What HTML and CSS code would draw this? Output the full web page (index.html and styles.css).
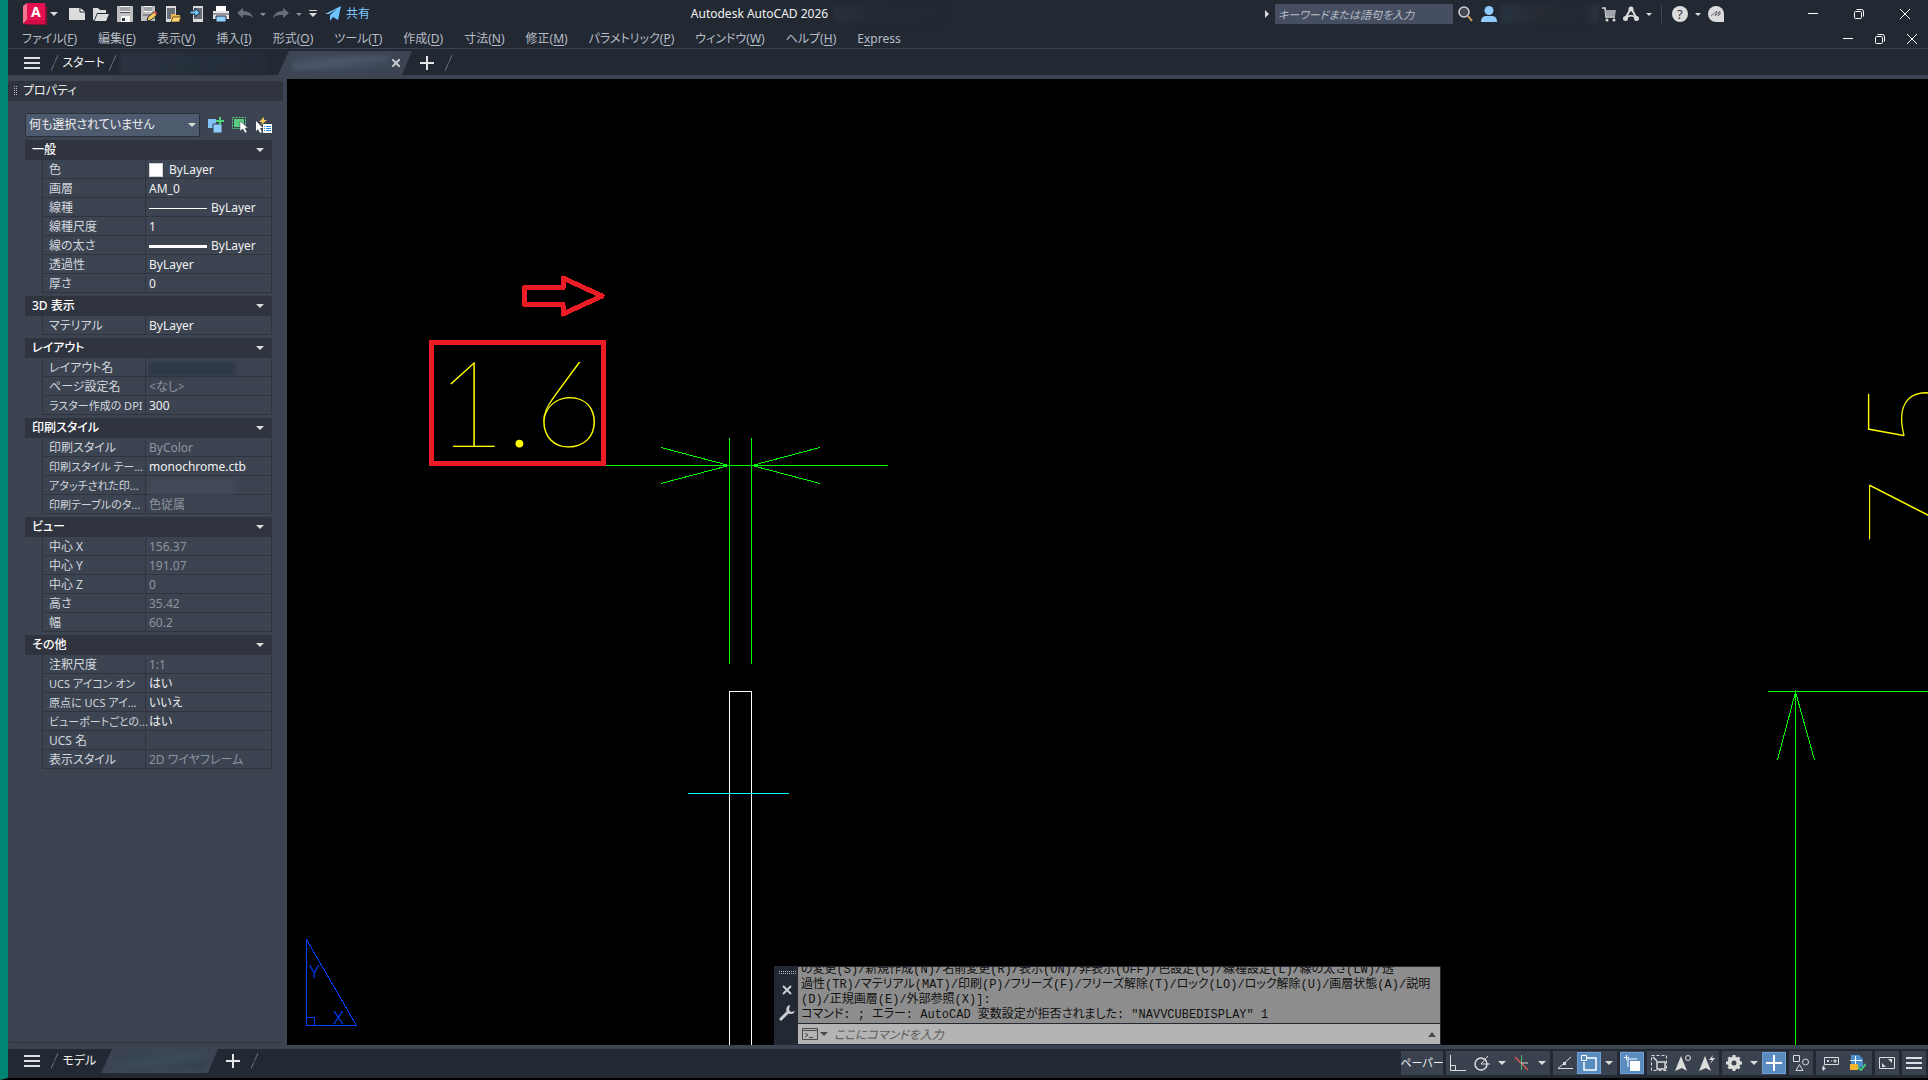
FILE: index.html
```html
<!DOCTYPE html>
<html lang="ja">
<head>
    <meta charset="UTF-8">
    <meta name="viewport" content="width=device-width, initial-scale=1.0">
    <title>Autodesk AutoCAD 2026</title>
    <link rel="stylesheet" href="styles.css">
</head>
<body>
    <header class="titlebar">
        <div class="quick-access">
            <button class="app-btn" aria-label="アプリケーション">
                <svg width="24" height="22" viewBox="0 0 24 22"><path d="M3 3h21v19H3z" fill="#8a0f35"/><path d="M0 3l4-3v17l-4 4z" fill="#f0748d"/><path d="M4 0h18v18H4z" fill="#e51050"/><path d="M0 21l4-4h18v4z" fill="#d30a45"/><text x="8" y="14" class="logo-letter">A</text></svg>
                <i class="caret"></i>
            </button>
            <button class="icon-btn" aria-label="新規"><svg width="16" height="16"><path d="M0 2h11l5 4v8H0z" fill="#dcdcdc"/><path d="M11 2v4h5" fill="#fff" stroke="#222933"/></svg></button>
            <button class="icon-btn" aria-label="開く"><svg width="16" height="16"><path d="M0 14V2h5l2 2h6v3H4L1 14z" fill="#dcdcdc"/><path d="M4.500 8H16l-3 7H1.500z" fill="#dcdcdc"/></svg></button>
            <button class="icon-btn" aria-label="上書き保存"><svg width="16" height="16"><path d="M0 0h16v16H0z" fill="#bfbfbf"/><path d="M3 0h10v6H3zM4 10h9v6H4z" fill="#f4f4f4"/><path d="M3 2h10M3 4h10M3 6.500h10" stroke="#4a4f58"/><path d="M5 12h3v3H5z" fill="#30353e"/></svg></button>
            <button class="icon-btn" aria-label="名前を付けて保存"><svg width="16" height="16"><path d="M0 0h14v15H0z" fill="#bfbfbf"/><path d="M3 0h8v6H3z" fill="#f4f4f4"/><path d="M3 2h8M3 4h8M2 9h9" stroke="#4a4f58"/><path d="M6 15l1-4 6-5 3 3-6 5z" fill="#f5c95c" stroke="#222933"/><path d="M12 6l2-1 2 2-1 2z" fill="#e05252"/></svg></button>
            <button class="icon-btn" aria-label="Web から開く"><svg width="16" height="16"><path d="M1 0h10v16H1z" fill="#dcdcdc"/><path d="M2 2h8v11H2z" fill="#6a6e76"/><path d="M6 15V8h4l1 1h4v6z" fill="#e8b64c"/><path d="M8 11h8l-2 5H6z" fill="#ffd77a" stroke="#6b4f1c"/></svg></button>
            <button class="icon-btn" aria-label="Web に保存"><svg width="16" height="16"><path d="M4 0h10v16H4z" fill="#dcdcdc"/><path d="M5 2h8v11H5z" fill="#6a6e76"/><path d="M1 5h5V2l5 4.500L6 11V8H1z" fill="#6fc3ff" stroke="#222933"/></svg></button>
            <button class="icon-btn" aria-label="印刷"><svg width="16" height="16"><path d="M3 0h10v5H3z" fill="#fff"/><path d="M0 5h16v8H0z" fill="#e6e6e6"/><path d="M0 8h16" stroke="#41464f"/><path d="M3 10h10v6H3z" fill="#8fd0ff" stroke="#222933"/></svg></button>
            <button class="icon-btn dim" aria-label="元に戻す"><svg width="16" height="16"><path d="M0 7l6-5v3c6 0 9 3 10 7-3-3-6-3-10-3v3z" fill="#696f79"/></svg></button>
            <button class="caret-btn dim" aria-label="元に戻す履歴"><i class="caret small"></i></button>
            <button class="icon-btn dim" aria-label="やり直し"><svg width="16" height="16"><path d="M16 7l-6-5v3C4 5 1 8 0 12c3-3 6-3 10-3v3z" fill="#696f79"/></svg></button>
            <button class="caret-btn dim" aria-label="やり直し履歴"><i class="caret small"></i></button>
            <button class="more-btn" aria-label="カスタマイズ"><svg width="8" height="8"><path d="M0 0h8v1H0zM0 3h8L4 7z" fill="#dcdcdc"/></svg></button>
            <button class="share-btn"><svg width="16" height="16"><path d="M0 8L16 0l-3 14-5-3-3 4V9l7-6-8 5z" fill="#6fc3ff"/></svg>共有</button>
        </div>
        <div class="app-title">
            <h1>Autodesk AutoCAD 2026</h1>
            <div class="smudge title-smudge"></div>
        </div>
        <div class="account">
            <svg width="10" height="10"><path d="M0 1v8l4-4z" fill="#dcdcdc"/></svg>
            <input class="search" type="text" aria-label="検索" placeholder="キーワードまたは語句を入力">
            <button class="icon-btn" aria-label="検索"><svg width="16" height="16"><circle cx="7" cy="6" r="5" fill="#454a50" stroke="#cfd2d6" stroke-width="1.500"/><path d="M11 10l4 5" stroke="#d8a35d" stroke-width="2"/></svg></button>
            <button class="icon-btn" aria-label="ユーザー"><svg width="16" height="16"><circle cx="8" cy="4.500" r="4.500" fill="#8fcbff"/><path d="M0 16c0-4 2-6 5-6h6c3 0 5 2 5 6z" fill="#8fcbff"/></svg></button>
            <div class="smudge user-smudge"></div>
            <button class="icon-btn slim" aria-label="ストア"><svg width="14" height="16"><path d="M0 2h3l1 9h9" fill="none" stroke="#dcdcdc" stroke-width="1.500"/><path d="M3 4h11l-1 6H4z" fill="#a0a4aa"/><circle cx="5" cy="14" r="1.500" fill="#dcdcdc"/><circle cx="12" cy="14" r="1.500" fill="#dcdcdc"/></svg></button>
            <button class="icon-btn" aria-label="Autodesk App"><svg width="16" height="16"><path d="M8 2L2 13M8 2l6 11M3 12c3-3 7-3 10 0" fill="none" stroke="#dcdcdc" stroke-width="2"/><circle cx="8" cy="3" r="2.500" fill="#dcdcdc"/><circle cx="2.500" cy="12.500" r="2.500" fill="#dcdcdc"/><circle cx="13.500" cy="12.500" r="2.500" fill="#dcdcdc"/></svg></button>
            <button class="caret-btn" aria-label="App メニュー"><i class="caret small"></i></button>
            <span class="divider"></span>
            <button class="icon-btn" aria-label="ヘルプ"><svg width="16" height="16"><circle cx="8" cy="8" r="8" fill="#dcdcdc"/><text x="5" y="13" class="help-mark">?</text></svg></button>
            <button class="caret-btn" aria-label="ヘルプ メニュー"><i class="caret small"></i></button>
            <button class="icon-btn" aria-label="アシスタント"><svg width="16" height="16"><path d="M8 0a8 8 0 0 1 8 8v8H8A8 8 0 0 1 8 0z" fill="#dcdcdc"/><path d="M3 10l6-5-2 5 5-5-2 5 3-3" fill="none" stroke="#6a6f78"/></svg></button>
        </div>
        <div class="window-controls">
            <button aria-label="最小化"><svg width="10" height="10"><path d="M0 4.500h10" stroke="#fff"/></svg></button>
            <button aria-label="元のサイズ"><svg width="10" height="10"><rect x=".5" y="2.500" width="7" height="7" rx="1" fill="none" stroke="#fff"/><path d="M2.500.5h5a2 2 0 0 1 2 2v5" fill="none" stroke="#fff"/></svg></button>
            <button aria-label="閉じる"><svg width="10" height="10"><path d="M0 0l10 10M10 0L0 10" stroke="#fff"/></svg></button>
        </div>
    </header>

    <nav class="menubar">
        <button>ファイル(<u>F</u>)</button>
        <button>編集(<u>E</u>)</button>
        <button>表示(<u>V</u>)</button>
        <button>挿入(<u>I</u>)</button>
        <button>形式(<u>O</u>)</button>
        <button>ツール(<u>T</u>)</button>
        <button>作成(<u>D</u>)</button>
        <button>寸法(<u>N</u>)</button>
        <button>修正(<u>M</u>)</button>
        <button>パラメトリック(<u>P</u>)</button>
        <button>ウィンドウ(<u>W</u>)</button>
        <button>ヘルプ(<u>H</u>)</button>
        <button>E<u>x</u>press</button>
        <div class="window-controls compact">
            <button aria-label="図面を最小化"><svg width="10" height="10"><path d="M0 4.500h10" stroke="#fff"/></svg></button>
            <button aria-label="図面を元のサイズに戻す"><svg width="10" height="10"><rect x=".5" y="2.500" width="7" height="7" rx="1" fill="none" stroke="#fff"/><path d="M2.500.5h5a2 2 0 0 1 2 2v5" fill="none" stroke="#fff"/></svg></button>
            <button aria-label="図面を閉じる"><svg width="10" height="10"><path d="M0 0l10 10M10 0L0 10" stroke="#fff"/></svg></button>
        </div>
    </nav>

    <div class="tabs file-tabs">
        <button class="burger" aria-label="ファイル タブ メニュー"><i></i><i></i><i></i></button>
        <span class="slash"></span>
        <button class="tab start-tab">スタート</button>
        <span class="slash"></span>
        <div class="smudge tab-smudge"></div>
        <div class="tab-active">
            <div class="smudge"></div>
            <button aria-label="タブを閉じる"><svg width="8" height="8"><path d="M0 0l8 8M8 0L0 8" stroke="#c9cdd3" stroke-width="2"/></svg></button>
        </div>
        <button class="plus" aria-label="新しい図面"><svg width="14" height="14"><path d="M7 0v14M0 7h14" stroke="#e4e6e8" stroke-width="2"/></svg></button>
        <span class="slash"></span>
    </div>

    <main class="workspace">
        <aside class="palette">
            <div class="palette-head"><span class="grip"></span><h2>プロパティ</h2></div>
            <div class="palette-body">
                <div class="selector">
                    <div class="select-box">
                        <select aria-label="選択オブジェクト">
                            <option>何も選択されていません</option>
                        </select>
                        <i class="caret"></i>
                    </div>
                    <button class="icon-btn" aria-label="PICKADD"><svg width="16" height="16"><path d="M0 2h8v9H0z" fill="#7fc2f5"/><path d="M5 7h9v9H5z" fill="#8fcbff" stroke="#3c4452"/><path d="M12 0v8M8 4h8" stroke="#4fd07c" stroke-width="2"/></svg></button>
                    <button class="icon-btn" aria-label="オブジェクトを選択"><svg width="16" height="16"><path d="M2 2h10v8H2z" fill="#5ccd83"/><path d="M.5.5h13v11H.500z" fill="none" stroke="#5ccd83" stroke-dasharray="2 1"/><path d="M8 4v10l3-2 2 4 2-1-2-4h3z" fill="#fff" stroke="#3c4452" stroke-width=".5"/></svg></button>
                    <button class="icon-btn" aria-label="クイック選択"><svg width="16" height="16"><path d="M0 4v10l2-2 2 4 2-1-2-4h3z" fill="#fff"/><path d="M8 0L3 5h3L5 8l6-5H8z" fill="#f5c95c"/><path d="M7 7h9v9H7z" fill="#fff"/><path d="M8 9.500h1m1 0h5M8 11.500h1m1 0h5M8 13.500h1m1 0h5" stroke="#2c8be0"/></svg></button>
                </div>

                <section>
                    <button class="group-head">一般<i class="caret"></i></button>
                    <table>
                        <tr><th scope="row">色</th><td><i class="swatch"></i>ByLayer</td></tr>
                        <tr><th scope="row">画層</th><td>AM_0</td></tr>
                        <tr><th scope="row">線種</th><td><i class="line"></i>ByLayer</td></tr>
                        <tr><th scope="row">線種尺度</th><td>1</td></tr>
                        <tr><th scope="row">線の太さ</th><td><i class="line thick"></i>ByLayer</td></tr>
                        <tr><th scope="row">透過性</th><td>ByLayer</td></tr>
                        <tr><th scope="row">厚さ</th><td>0</td></tr>
                    </table>
                </section>
                <section>
                    <button class="group-head">3D 表示<i class="caret"></i></button>
                    <table>
                        <tr><th scope="row">マテリアル</th><td>ByLayer</td></tr>
                    </table>
                </section>
                <section>
                    <button class="group-head">レイアウト<i class="caret"></i></button>
                    <table>
                        <tr><th scope="row">レイアウト名</th><td><div class="smudge cell-smudge"></div></td></tr>
                        <tr><th scope="row">ページ設定名</th><td class="readonly">&lt;なし&gt;</td></tr>
                        <tr><th scope="row" class="long">ラスター作成の DPI</th><td>300</td></tr>
                    </table>
                </section>
                <section>
                    <button class="group-head">印刷スタイル<i class="caret"></i></button>
                    <table>
                        <tr><th scope="row">印刷スタイル</th><td class="readonly">ByColor</td></tr>
                        <tr><th scope="row" class="long">印刷スタイル テー...</th><td>monochrome.ctb</td></tr>
                        <tr><th scope="row" class="long">アタッチされた印...</th><td><div class="smudge cell-smudge light"></div></td></tr>
                        <tr><th scope="row" class="long">印刷テーブルのタ...</th><td class="readonly">色従属</td></tr>
                    </table>
                </section>
                <section>
                    <button class="group-head">ビュー<i class="caret"></i></button>
                    <table class="readonly">
                        <tr><th scope="row">中心 X</th><td>156.37</td></tr>
                        <tr><th scope="row">中心 Y</th><td>191.07</td></tr>
                        <tr><th scope="row">中心 Z</th><td>0</td></tr>
                        <tr><th scope="row">高さ</th><td>35.42</td></tr>
                        <tr><th scope="row">幅</th><td>60.2</td></tr>
                    </table>
                </section>
                <section>
                    <button class="group-head">その他<i class="caret"></i></button>
                    <table>
                        <tr><th scope="row">注釈尺度</th><td class="readonly">1:1</td></tr>
                        <tr><th scope="row" class="long">UCS アイコン オン</th><td>はい</td></tr>
                        <tr><th scope="row" class="long">原点に UCS アイ...</th><td>いいえ</td></tr>
                        <tr><th scope="row" class="long">ビューポートごとの...</th><td>はい</td></tr>
                        <tr><th scope="row">UCS 名</th><td></td></tr>
                        <tr><th scope="row">表示スタイル</th><td class="readonly">2D ワイヤフレーム</td></tr>
                    </table>
                </section>
            </div>
        </aside>

        <div class="drawing">
            <svg class="model" viewBox="287 79 1641 966" preserveAspectRatio="xMinYMin slice">
                <!-- dimension text -->
                <text class="dim-text" x="436" y="447">1.6</text>
                <text class="dim-text" transform="translate(1953 548) rotate(-90)">7.5</text>

                <!-- dimension lines -->
                <g class="green">
                    <path d="M606 465.500H888M729.500 438V664M751.500 438V664"/>
                    <path d="M661 447.500l68 18-68 18M820 447.500l-68 18 68 18"/>
                    <path d="M1768 691.500H1928M1795.500 691V1045M1777.500 760l18-68 19 68"/>
                </g>

                <!-- part outline and centre line -->
                <path class="white" d="M729.500 1045V691.500H751.500V1045"/>
                <path class="cyan" d="M688 793.500H789"/>

                <!-- markup -->
                <rect class="red" x="431.500" y="342.500" width="172" height="121"/>
                <path class="red round" d="M524.500 287.500H563V278l39 18-39 18v-9.500H524.500z"/>

                <!-- UCS icon -->
                <path class="blue" d="M306.500 939.500V1025.500H356.500zM306.500 1017.500h8v8"/>
                <text class="ucs-text" x="309" y="978">Y</text>
                <text class="ucs-text" x="333" y="1024">X</text>
            </svg>

            <div class="command">
                <div class="command-side">
                    <span class="grip wide"></span>
                    <button aria-label="閉じる"><svg width="10" height="12"><path d="M1 2l8 8M9 2L1 10" stroke="#c9cdd3" stroke-width="2"/></svg></button>
                    <button aria-label="カスタマイズ"><svg width="16" height="16"><path d="M1 15L9 7" stroke="#c9cdd3" stroke-width="3"/><path d="M11 0a4.500 4.500 0 1 0 5 6l-4 1-2-2z" fill="#c9cdd3"/></svg></button>
                </div>
                <div class="command-main">
                    <div class="history">
                        <p>の変更(S)/新規作成(N)/名前変更(R)/表示(ON)/非表示(OFF)/色設定(C)/線種設定(L)/線の太さ(LW)/透</p>
                        <p>過性(TR)/マテリアル(MAT)/印刷(P)/フリーズ(F)/フリーズ解除(T)/ロック(LO)/ロック解除(U)/画層状態(A)/説明</p>
                        <p>(D)/正規画層(E)/外部参照(X)]:</p>
                        <p>コマンド: ; エラー: AutoCAD 変数設定が拒否されました: "NAVVCUBEDISPLAY" 1</p>
                    </div>
                    <div class="prompt">
                        <button aria-label="最近使用したコマンド"><svg width="26" height="12"><path d="M.5.5h15v11H.500zM.5 2.500h15M3 5l3 2-3 2M7 9.500h4" fill="none" stroke="#4a4a4a"/><path d="M18 4h8l-4 4z" fill="#4a4a4a"/></svg></button>
                        <input type="text" aria-label="コマンド" placeholder="ここにコマンドを入力">
                        <button aria-label="履歴を表示"><svg width="8" height="5"><path d="M0 5h8L4 0z" fill="#4a4a4a"/></svg></button>
                    </div>
                </div>
            </div>
        </div>
    </main>

    <footer class="statusbar">
        <div class="tabs layout-tabs">
            <button class="burger" aria-label="レイアウト メニュー"><i></i><i></i><i></i></button>
            <span class="slash"></span>
            <button class="tab">モデル</button>
            <div class="tab-active"><div class="smudge"></div></div>
            <button class="plus" aria-label="新しいレイアウト"><svg width="14" height="14"><path d="M7 0v14M0 7h14" stroke="#e4e6e8" stroke-width="2"/></svg></button>
            <span class="slash"></span>
        </div>
        <div class="status-tools">
            <div class="tool-group"><button class="paper">ペーパー</button></div>
            <div class="tool-group">
                <button aria-label="直交モード"><svg width="16" height="16"><path d="M.5 0v15.500H16M.5 10.500h5v5" fill="none" stroke="#dcdcdc"/></svg></button>
                <button aria-label="極トラッキング"><svg width="16" height="16"><circle cx="7" cy="9" r="6" fill="none" stroke="#dcdcdc" stroke-width="1.500"/><path d="M7 9h9M7 9l7-8" stroke="#dcdcdc"/></svg></button>
                <button class="narrow" aria-label="極トラッキング設定"><i class="caret"></i></button>
                <button aria-label="アイソメ作図"><svg width="16" height="16"><path d="M1 2l13 13" stroke="#d85757" stroke-width="1.500"/><path d="M7.500 0v15" stroke="#4fb86c"/><path d="M7 8h7" stroke="#dcdcdc"/></svg></button>
                <button class="narrow" aria-label="アイソメ作図設定"><i class="caret"></i></button>
            </div>
            <div class="tool-group">
                <button aria-label="オブジェクト スナップ トラッキング"><svg width="16" height="16"><path d="M14 2L1 13.500h15" fill="none" stroke="#dcdcdc"/><path d="M6 7h3v3H6z" fill="#dcdcdc"/></svg></button>
                <button class="on" aria-label="オブジェクト スナップ"><svg width="16" height="16"><path d="M6 3h9v12H3V7" fill="none" stroke="#fff" stroke-width="1.500"/><path d="M.5.5h5v5h-5z" fill="none" stroke="#fff"/></svg></button>
                <button class="narrow" aria-label="オブジェクト スナップ設定"><i class="caret"></i></button>
            </div>
            <div class="tool-group">
                <button class="on" aria-label="選択の循環"><svg width="16" height="16"><path d="M6 6h10v10H6z" fill="#fff"/><path d="M4 12V4h9" fill="none" stroke="#fff"/><path d="M2.500 0v5M0 2.500h5" stroke="#fff"/></svg></button>
            </div>
            <div class="tool-group">
                <button aria-label="注釈モニター"><svg width="16" height="16"><path d="M.5 15.500V.5h15v15z" fill="none" stroke="#dcdcdc" stroke-dasharray="3 2"/><path d="M6 7h8v7H6zM2 2l4 4" fill="none" stroke="#dcdcdc" stroke-width="1.500"/></svg></button>
                <button aria-label="注釈の可視性"><svg width="16" height="16"><path d="M6 1l6 15-5-3-7 3z" fill="#dcdcdc"/><circle cx="13" cy="3" r="2.500" fill="none" stroke="#dcdcdc"/></svg></button>
                <button aria-label="自動尺度"><svg width="16" height="16"><path d="M6 1l6 15-5-3-7 3z" fill="#dcdcdc"/><path d="M14 0l-4 5h3l-2 4 5-6h-3z" fill="#dcdcdc"/></svg></button>
            </div>
            <div class="tool-group">
                <button aria-label="ワークスペースの切り替え"><svg width="16" height="16"><circle cx="8" cy="8" r="4.500" fill="none" stroke="#dcdcdc" stroke-width="4"/><path d="M8 0v3M8 13v3M0 8h3M13 8h3M2.500 2.500l2 2M11.500 11.500l2 2M13.500 2.500l-2 2M4.500 11.500l-2 2" stroke="#dcdcdc" stroke-width="3"/></svg></button>
                <button class="narrow" aria-label="ワークスペース"><i class="caret"></i></button>
                <button class="on" aria-label="注釈表示"><svg width="16" height="16"><path d="M8 0v16M0 8h16" stroke="#fff" stroke-width="2"/></svg></button>
            </div>
            <div class="tool-group">
                <button aria-label="オブジェクトを選択表示"><svg width="16" height="16"><path d="M.5.5h6v6h-6zM3 15.500l3.500-6 3.500 6z" fill="none" stroke="#dcdcdc"/><circle cx="12.500" cy="7" r="3" fill="none" stroke="#dcdcdc"/></svg></button>
            </div>
            <div class="tool-group roomy">
                <button aria-label="単位"><svg width="17" height="16"><path d="M2.500 2.500h14v7h-14zM5 5l2 2M7 5L5 7M9 6h1M12 5h2v2h-2zM2 10l-1 5" fill="none" stroke="#dcdcdc"/><path d="M0 12l1 4 3-3z" fill="#dcdcdc"/></svg></button>
                <button aria-label="グラフィックス パフォーマンス"><svg width="16" height="16"><path d="M1 0h8l4 4v8H1z" fill="#4a8fd0"/><path d="M0 9h8v6H0z" fill="#f5b32d"/><path d="M5.500 1v8M0 5.500h12" stroke="#fff"/><path d="M8 12l3 3 5-6" fill="none" stroke="#42c57a" stroke-width="2"/></svg></button>
            </div>
            <div class="tool-group">
                <button aria-label="フルスクリーン表示"><svg width="16" height="16"><path d="M.5 2.500h15v11H.500z" fill="none" stroke="#dcdcdc"/><path d="M9 4h4v4zM3 8v4h4z" fill="#dcdcdc"/></svg></button>
            </div>
            <div class="tool-group">
                <button class="burger" aria-label="カスタマイズ"><i></i><i></i><i></i></button>
            </div>
        </div>
    </footer>
</body>
</html>
```
FILE: styles.css
```css
* {
    margin: 0;
    padding: 0;
    box-sizing: border-box;
}

body {
    display: flex;
    flex-direction: column;
    height: 100vh;
    overflow: hidden;
    border-left: 8px solid #008575;
    border-bottom: 2px solid #000;
    background: #222933;
    color: #f0f0f0;
    font-family: "Noto Sans", "Noto Sans CJK JP", sans-serif;
    font-size: 12px;
    font-feature-settings: "palt";
    line-height: 16px;
}

button,
input,
select {
    border: none;
    background: none;
    color: inherit;
    font: inherit;
    font-feature-settings: inherit;
}

button {
    display: flex;
    align-items: center;
    justify-content: center;
    white-space: nowrap;
}

svg {
    display: block;
    flex: none;
}

h1,
h2 {
    font-size: 12px;
    font-weight: normal;
}

.caret {
    flex: none;
    border: 4px solid transparent;
    border-top-color: #dcdcdc;
    border-bottom: none;
}

.caret.small {
    border-width: 3px;
    border-bottom: none;
}

.dim .caret {
    border-top-color: #8a8f98;
}

.icon-btn {
    width: 24px;
    height: 24px;
    flex: none;
}

.caret-btn {
    width: 12px;
    height: 24px;
}

.smudge {
    background: linear-gradient(100deg, #2c3441, #26303c 50%, #242c38);
    filter: blur(2px);
}

/* Title bar */
.titlebar {
    display: flex;
    align-items: center;
    height: 28px;
    flex: none;
}

.quick-access {
    display: flex;
    align-items: center;
    padding-left: 12px;
}

.app-btn {
    width: 45px;
    gap: 3px;
    padding-right: 5px;
}

.logo-letter {
    fill: #fff;
    font-size: 14px;
    font-weight: bold;
}

.more-btn {
    width: 16px;
    height: 24px;
}

.share-btn {
    gap: 5px;
    padding-left: 4px;
    color: #7cc8ff;
}

.app-title {
    flex: 1;
    display: flex;
    justify-content: center;
    align-items: center;
    gap: 6px;
}

.title-smudge {
    width: 110px;
    height: 16px;
    background: linear-gradient(90deg, #2c313c, #232b37 30%, #222933);
}

.account {
    display: flex;
    align-items: center;
    padding-right: 62px;
}

.search {
    width: 178px;
    height: 20px;
    padding: 0 3px;
    background: #464f61;
    font-size: 11px;
}

.search::placeholder {
    color: #b9bec8;
    font-style: italic;
}

.user-smudge {
    width: 98px;
    height: 18px;
    background: linear-gradient(90deg, #283441, #262b33 40%, #222933 85%, #30353d);
}

.icon-btn.slim {
    width: 20px;
}

.divider {
    width: 1px;
    height: 18px;
    margin: 0 6px;
    background: #414855;
}

.help-mark {
    fill: #30353e;
    font-size: 13px;
}

.window-controls {
    display: flex;
    margin-left: auto;
}

.window-controls button {
    width: 46px;
    height: 20px;
}

.window-controls.compact button {
    width: 32px;
}

/* Menu bar */
.menubar {
    display: flex;
    align-items: center;
    gap: 21px;
    height: 21px;
    flex: none;
    padding: 2px 0 0 14px;
    border-bottom: 1px solid #3d4554;
    color: #b8bdc6;
}

.menubar > button {
    display: block;
}

.menubar u {
    text-underline-offset: 2px;
}

/* Tabs */
.tabs {
    display: flex;
    align-items: center;
}

.file-tabs {
    height: 26px;
    flex: none;
    padding-top: 2px;
}

.burger {
    flex-direction: column;
    gap: 3px;
    width: 16px;
    height: 16px;
}

.tabs .burger {
    margin: 0 11px 0 16px;
}

.burger i {
    width: 16px;
    height: 2px;
    background: #dcdfe3;
}

.slash {
    width: 7px;
    height: 16px;
    background: linear-gradient(114deg, transparent 46%, #555d6a 46%, #555d6a 54%, transparent 54%);
}

.tab {
    width: 43px;
}

.start-tab {
    width: 51px;
}

.tab-smudge {
    width: 148px;
    height: 22px;
    margin: 0 10px 0 4px;
}

.tab-active {
    display: flex;
    align-items: center;
    width: 134px;
    height: 24px;
    align-self: flex-end;
    background: #3d4554;
    clip-path: polygon(11px 0, 100% 0, calc(100% - 10px) 100%, 0 100%);
}

.tab-active .smudge {
    width: 98px;
    height: 14px;
    margin: 0 2px 0 14px;
    background: linear-gradient(170deg, #3d4554, #4b586c 45%, #36404f);
}

.plus {
    width: 14px;
    margin: 0 11px 0 8px;
}

/* Workspace */
.workspace {
    display: flex;
    flex: 1;
    min-height: 0;
    padding: 4px 0;
    background: #3c4452;
}

.palette {
    width: 279px;
    flex: none;
    padding: 2px 4px 2px 0;
    display: flex;
    flex-direction: column;
}

.palette-head {
    display: flex;
    align-items: center;
    gap: 6px;
    height: 20px;
    flex: none;
    padding-left: 5px;
    background: #2f343f;
    border-radius: 4px 4px 0 0;
}

.grip {
    width: 4px;
    height: 10px;
    background: conic-gradient(#b4b8c0 25%, transparent 25%) 0 0 / 2px 2px;
}

.palette-body {
    flex: 1;
    padding: 12px 11px 0 17px;
    border-bottom: 1px solid #2f343f;
    border-radius: 0 0 4px 4px;
}

.selector {
    display: flex;
    align-items: center;
    height: 24px;
    margin: 0 -4px 3px 0;
}

.select-box {
    display: flex;
    align-items: center;
    width: 175px;
    flex: none;
    height: 24px;
    margin-right: 4px;
    padding-right: 3px;
    background: #4e5a6e;
    border: 1px solid #2a303a;
    border-radius: 2px;
}

.select-box select {
    appearance: none;
    flex: 1;
    min-width: 0;
    padding-left: 3px;
}

section {
    margin-bottom: 3px;
}

.group-head {
    justify-content: space-between;
    width: 100%;
    height: 20px;
    padding: 0 8px 0 7px;
    background: #2f343f;
    color: #fff;
    font-weight: 500;
}

table {
    width: 230px;
    margin-left: 17px;
    table-layout: fixed;
    border-spacing: 0;
    border-left: 1px solid #2f343f;
}

th,
td {
    height: 19px;
    padding-top: 2px;
    border-right: 1px solid #2f343f;
    border-bottom: 1px solid #2f343f;
    line-height: 16px;
    white-space: nowrap;
}

th {
    width: 103px;
    padding-left: 6px;
    color: #d3d7dd;
    font-weight: normal;
    text-align: left;
}

th.long {
    font-size: 11px;
}

td {
    padding-left: 3px;
}

.readonly,
.readonly td {
    color: #8e949e;
}

.swatch {
    display: inline-block;
    width: 14px;
    height: 14px;
    margin: -2px 6px 0 0;
    background: #fff;
    border: 1px solid #d0d0d0;
    vertical-align: middle;
}

.line {
    display: inline-block;
    width: 58px;
    height: 1px;
    margin-right: 4px;
    background: #fff;
    vertical-align: middle;
}

.line.thick {
    height: 3px;
}

.cell-smudge {
    width: 86px;
    height: 15px;
    background: #2f3845;
}

.cell-smudge.light {
    background: #434b58;
}

/* Drawing area */
.drawing {
    position: relative;
    flex: 1;
    min-width: 0;
    background: #000;
    overflow: hidden;
}

.model {
    width: 100%;
    height: 100%;
    fill: none;
    shape-rendering: crispEdges;
}

.green {
    stroke: #00ff00;
}

.white {
    stroke: #fff;
}

.cyan {
    stroke: #00ffff;
}

.blue {
    stroke: #0040ff;
}

.red {
    stroke: #ed1c24;
    stroke-width: 5px;
}

.round {
    stroke-linejoin: round;
}

.dim-text {
    fill: #ffff00;
    font-family: Lato, Roboto, sans-serif;
    font-size: 120px;
    font-weight: 100;
}

.ucs-text {
    fill: #0040ff;
    font-family: Roboto, Lato, sans-serif;
    font-size: 18px;
    font-weight: 300;
}

/* Command window */
.command {
    position: absolute;
    left: 487px;
    bottom: 0;
    display: flex;
    width: 667px;
    height: 79px;
    border: 1px solid #222933;
}

.command-side {
    display: flex;
    flex-direction: column;
    align-items: center;
    gap: 9px;
    width: 23px;
    padding-top: 4px;
    background: #222933;
}

.command-side .wide {
    width: 18px;
    height: 4px;
}

.command-main {
    flex: 1;
    display: flex;
    flex-direction: column;
    min-width: 0;
}

.history {
    display: flex;
    flex-direction: column;
    justify-content: flex-end;
    height: 56px;
    padding: 0 3px;
    overflow: hidden;
    background: #8d8d8d;
    color: #111;
    font-family: "Liberation Mono", "Noto Sans CJK JP", monospace;
}

.history p {
    flex: none;
    height: 15px;
    line-height: 15px;
    white-space: nowrap;
}

.prompt {
    display: flex;
    align-items: center;
    flex: 1;
    gap: 6px;
    padding: 0 4px;
    background: #b4b4b4;
    border-top: 1px solid #222933;
}

.prompt input {
    flex: 1;
    min-width: 0;
    height: 18px;
}

.prompt input::placeholder {
    color: #5c5c5c;
    font-style: italic;
}

/* Status bar */
.statusbar {
    display: flex;
    justify-content: space-between;
    height: 29px;
    flex: none;
}

.layout-tabs {
    height: 24px;
}

.layout-tabs .tab-active {
    width: 117px;
}

.layout-tabs .tab-active .smudge {
    width: 90px;
    background: linear-gradient(170deg, #35404d, #3c4c58 50%, #333d4d);
}

.status-tools {
    display: flex;
    gap: 3px;
    padding: 2px 2px 3px 0;
}

.tool-group {
    display: flex;
    align-items: center;
    background: #3a4250;
}

.tool-group button {
    width: 24px;
    height: 24px;
}

.tool-group .narrow {
    width: 16px;
}

.tool-group .on {
    height: 22px;
    background: #5b8cc0;
    border: 1px solid #6f9fd2;
}

.tool-group.roomy button {
    width: 28px;
}

.tool-group .paper {
    width: 42px;
    font-size: 11px;
}
```
